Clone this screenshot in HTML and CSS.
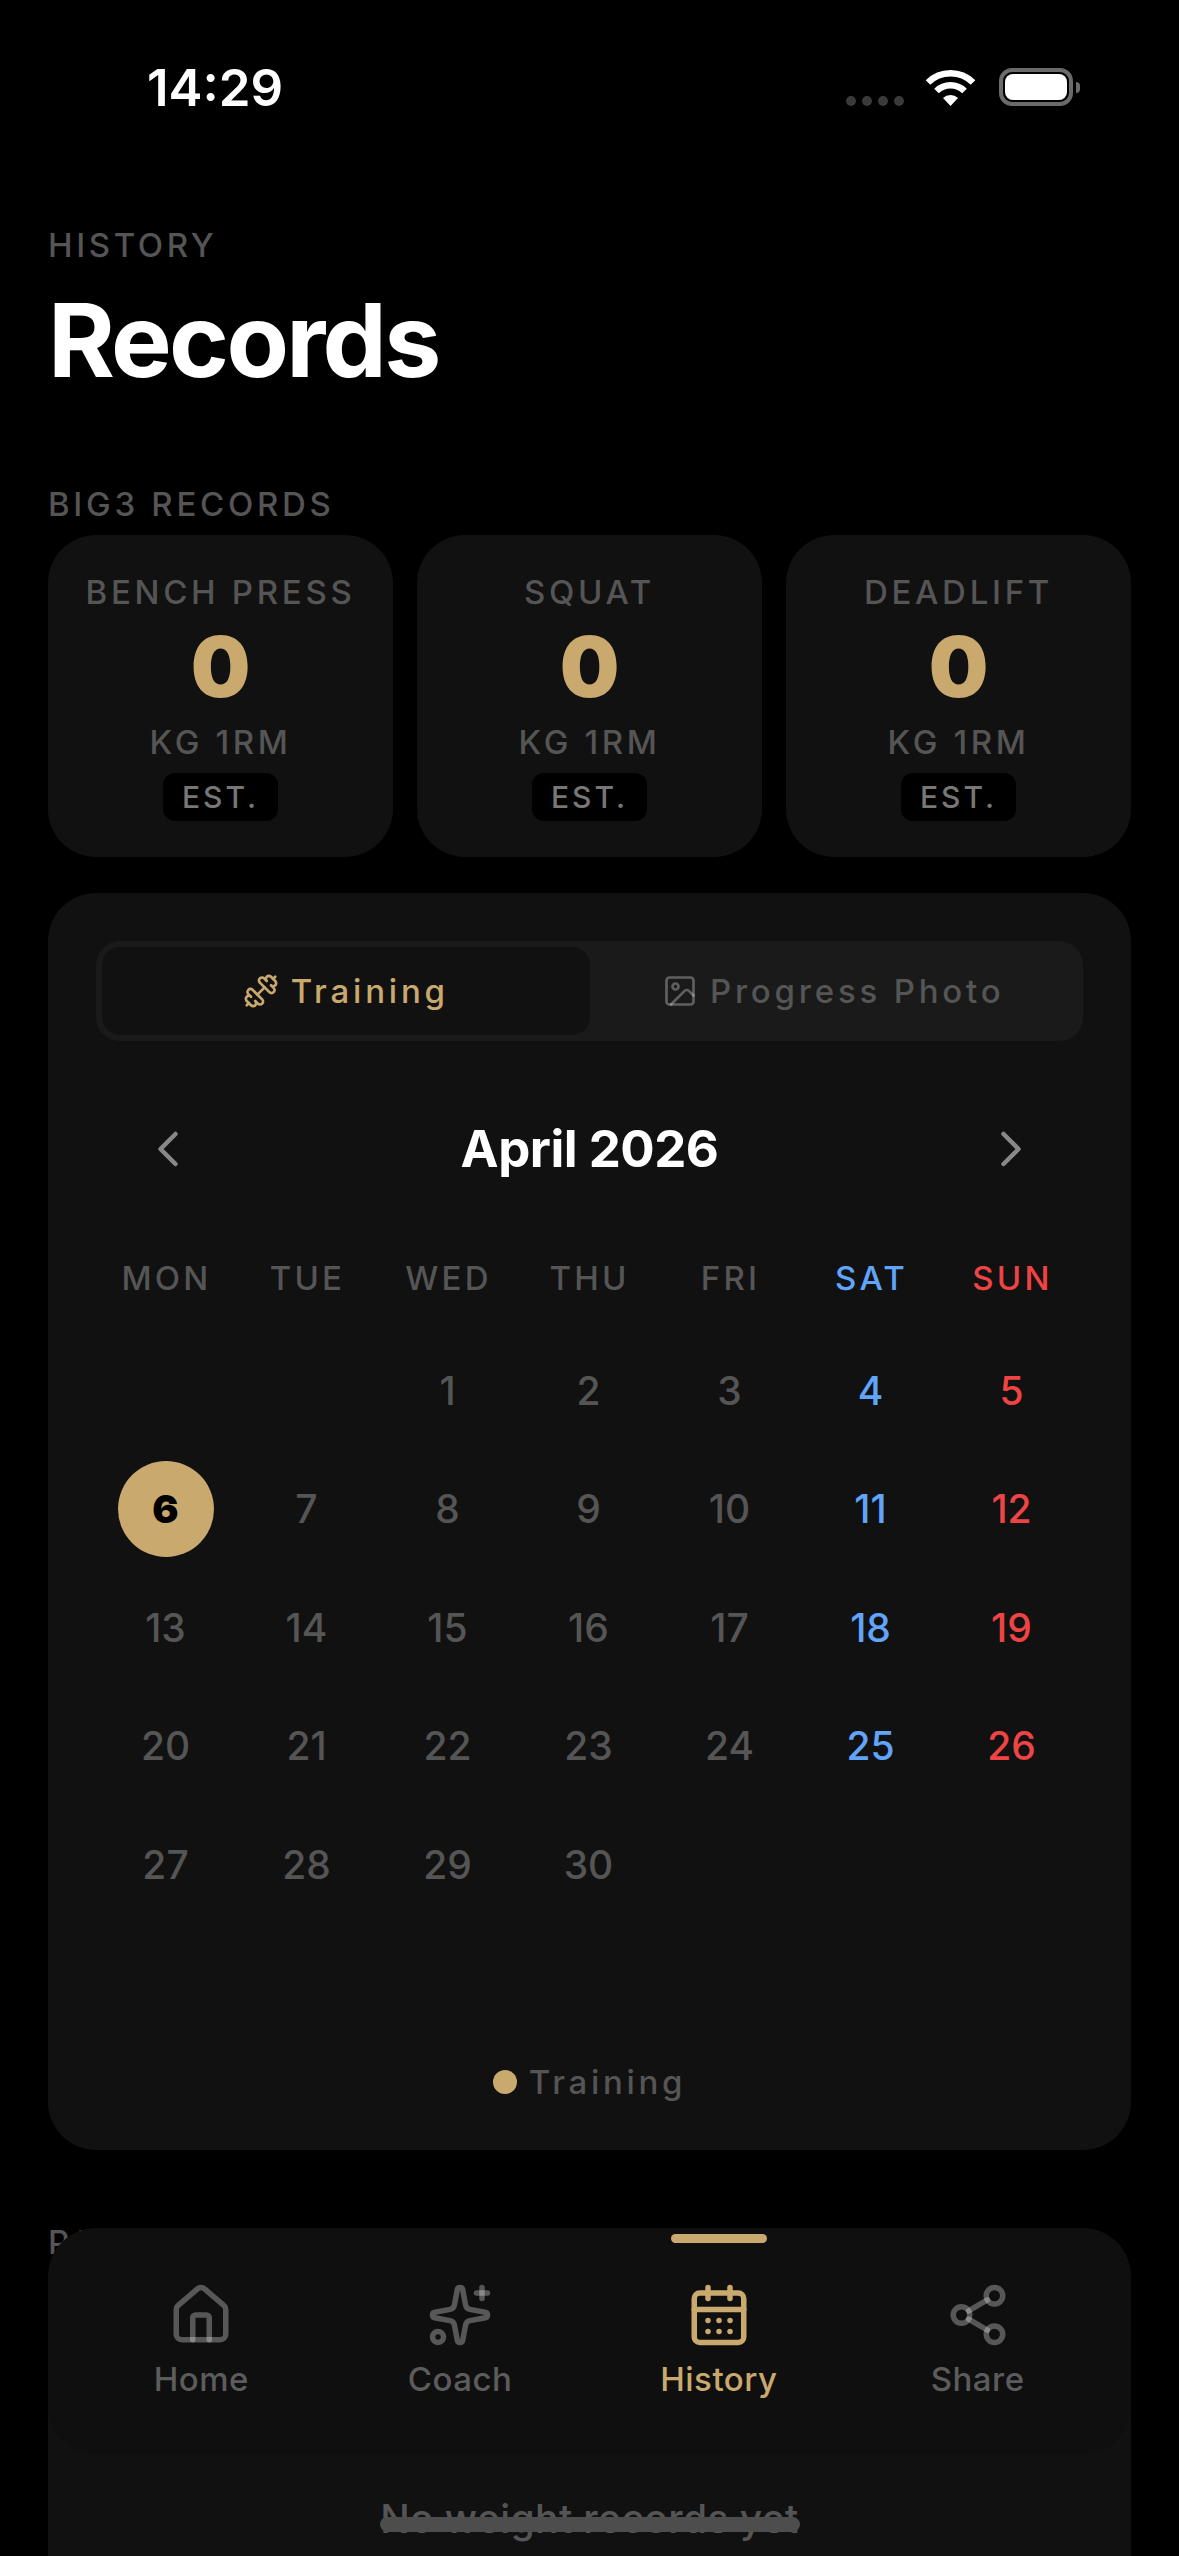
FILE: index.html
```html
<!DOCTYPE html>
<html lang="en">
<head>
<meta charset="utf-8">
<title>Records</title>
<link rel="stylesheet" href="styles.css">
</head>
<body>
<div class="screen">
  <div class="status">
    <span class="time">14:29</span>
    <div class="status-right">
      <div class="signal"><i></i><i></i><i></i><i></i></div>
      <svg class="wifi" viewBox="0 0 51 38"><path d="M3 14.5a32 32 0 0 1 45 0" fill="none" stroke="#fff" stroke-width="6.5"/><path d="M11.5 23a20 20 0 0 1 28 0" fill="none" stroke="#fff" stroke-width="6.5"/><path d="M18 30a11 11 0 0 1 15 0l-7.500 8z" fill="#fff"/></svg>
      <div class="battery"><div class="battery-fill"></div></div>
      <div class="battery-nub"></div>
    </div>
  </div>

  <main class="content">
    <div class="eyebrow">HISTORY</div>
    <h1 class="title">Records</h1>

    <div class="section-label big3-label">BIG3 RECORDS</div>
    <div class="records">
      <div class="record"><div class="record-name">BENCH PRESS</div><div class="record-value">0</div><div class="record-unit">KG 1RM</div><div class="badge">EST.</div></div>
      <div class="record"><div class="record-name">SQUAT</div><div class="record-value">0</div><div class="record-unit">KG 1RM</div><div class="badge">EST.</div></div>
      <div class="record"><div class="record-name">DEADLIFT</div><div class="record-value">0</div><div class="record-unit">KG 1RM</div><div class="badge">EST.</div></div>
    </div>

    <section class="calendar-card">
      <div class="tabs">
        <div class="tab tab-active">
          <svg class="tab-icon" viewBox="0 0 24 24"><path d="M17.596 12.768a2 2 0 1 0 2.829-2.829l-1.768-1.767a2 2 0 0 0 2.828-2.829l-2.828-2.828a2 2 0 0 0-2.829 2.828l-1.767-1.768a2 2 0 1 0-2.829 2.829z"/><path d="m2.500 21.500 1.400-1.400"/><path d="m20.100 3.900 1.400-1.400"/><path d="M5.343 21.485a2 2 0 1 0 2.829-2.828l1.767 1.768a2 2 0 1 0 2.829-2.829l-6.364-6.364a2 2 0 1 0-2.829 2.829l1.768 1.767a2 2 0 0 0-2.828 2.829z"/><path d="m9.600 14.400 4.800-4.800"/></svg>
          <span>Training</span>
        </div>
        <div class="tab">
          <svg class="tab-icon icon-muted" viewBox="0 0 24 24"><rect x="3" y="3" width="18" height="18" rx="2"/><circle cx="9" cy="9" r="2"/><path d="m21 15-3.086-3.086a2 2 0 0 0-2.828 0L6 21"/></svg>
          <span>Progress Photo</span>
        </div>
      </div>

      <div class="month-row">
        <svg class="chev" viewBox="0 0 24 24"><path d="m15 18-6-6 6-6"/></svg>
        <span class="month">April 2026</span>
        <svg class="chev" viewBox="0 0 24 24"><path d="m9 18 6-6-6-6"/></svg>
      </div>

      <div class="grid weekdays">
        <span>MON</span><span>TUE</span><span>WED</span><span>THU</span><span>FRI</span><span class="sat">SAT</span><span class="sun">SUN</span>
      </div>

      <div class="grid days">
        <span></span><span></span><span>1</span><span>2</span><span>3</span><span class="sat">4</span><span class="sun">5</span>
        <span><b class="today">6</b></span><span>7</span><span>8</span><span>9</span><span>10</span><span class="sat">11</span><span class="sun">12</span>
        <span>13</span><span>14</span><span>15</span><span>16</span><span>17</span><span class="sat">18</span><span class="sun">19</span>
        <span>20</span><span>21</span><span>22</span><span>23</span><span>24</span><span class="sat">25</span><span class="sun">26</span>
        <span>27</span><span>28</span><span>29</span><span>30</span><span></span><span></span><span></span>
      </div>

      <div class="legend"><i class="legend-dot"></i><span>Training</span></div>
    </section>

    <div class="section-label progress-label">PAST WEIGHT</div>
    <section class="empty-card">No weight records yet</section>
  </main>

  <nav class="nav">
    <div class="nav-marker"></div>
    <div class="nav-item">
      <svg class="nav-icon icon-muted" viewBox="0 0 24 24"><path d="M15 21v-8a1 1 0 0 0-1-1h-4a1 1 0 0 0-1 1v8"/><path d="M3 10a2 2 0 0 1 .709-1.528l7-5.999a2 2 0 0 1 2.582 0l7 5.999A2 2 0 0 1 21 10v9a2 2 0 0 1-2 2H5a2 2 0 0 1-2-2z"/></svg>
      <span>Home</span>
    </div>
    <div class="nav-item">
      <svg class="nav-icon icon-muted" viewBox="0 0 24 24"><path d="M11.017 2.814a1 1 0 0 1 1.966 0l1.051 5.558a2 2 0 0 0 1.594 1.594l5.558 1.051a1 1 0 0 1 0 1.966l-5.558 1.051a2 2 0 0 0-1.594 1.594l-1.051 5.558a1 1 0 0 1-1.966 0l-1.051-5.558a2 2 0 0 0-1.594-1.594l-5.558-1.051a1 1 0 0 1 0-1.966l5.558-1.051a2 2 0 0 0 1.594-1.594z"/><path d="M20 2v4"/><path d="M22 4h-4"/><circle cx="4" cy="20" r="2"/></svg>
      <span>Coach</span>
    </div>
    <div class="nav-item nav-active">
      <svg class="nav-icon" viewBox="0 0 24 24"><path d="M8 2v4"/><path d="M16 2v4"/><rect x="3" y="4" width="18" height="18" rx="2"/><path d="M3 10h18"/><path d="M8 14h.01"/><path d="M12 14h.01"/><path d="M16 14h.01"/><path d="M8 18h.01"/><path d="M12 18h.01"/><path d="M16 18h.01"/></svg>
      <span>History</span>
    </div>
    <div class="nav-item">
      <svg class="nav-icon icon-muted" viewBox="0 0 24 24"><circle cx="18" cy="5" r="3"/><circle cx="6" cy="12" r="3"/><circle cx="18" cy="19" r="3"/><path d="m8.590 13.510 6.830 3.980"/><path d="m15.410 6.510-6.820 3.980"/></svg>
      <span>Share</span>
    </div>
  </nav>
  <div class="home-bar"></div>
</div>
</body>
</html>
```
FILE: styles.css
```css
* { box-sizing: border-box; }
html, body { margin: 0; padding: 0; background: #000; }
body { font-family: Inter, "Noto Sans", sans-serif; color: #555; }
.screen { position: relative; width: 1179px; height: 2556px; overflow: hidden; background: #000; }

.status { height: 190px; position: relative; }
.time { position: absolute; left: 147px; top: 58px; font-size: 51px; line-height: 60px; font-weight: 600; color: #fff; }
.status-right { position: absolute; left: 846px; top: 68px; display: flex; align-items: flex-start; height: 38px; }
.signal { display: flex; gap: 6px; margin-top: 28px; }
.signal i { width: 10px; height: 10px; border-radius: 50%; background: #3a3a3a; }
.wifi { width: 51px; height: 38px; margin-left: 21px; }
.battery { width: 74px; height: 38px; margin-left: 23px; border: 4px solid #6b6b6b; border-radius: 13px; padding: 2px; }
.battery-fill { width: 100%; height: 100%; background: #fff; border-radius: 8px; }
.battery-nub { width: 4px; height: 11px; margin: 14px 0 0 3px; background: #6b6b6b; border-radius: 0 6px 6px 0; }

.content { padding: 0 48px; }
.eyebrow { font-size: 33px; line-height: 40px; letter-spacing: 3.600px; color: #555; font-weight: 500; margin-top: 35px; }
.title { margin: 20px 0 0; font-size: 102px; line-height: 110px; font-weight: 700; color: #fff; letter-spacing: -2.700px; }
.section-label { font-size: 33px; line-height: 40px; letter-spacing: 3.700px; font-weight: 500; color: #555; }
.big3-label { margin-top: 89px; }

.records { display: grid; grid-template-columns: repeat(3, 1fr); gap: 24px; margin-top: 11px; }
.record { background: #111; border-radius: 48px; padding: 36px 12px; display: flex; flex-direction: column; align-items: center; }
.record-name { font-size: 33px; line-height: 42px; letter-spacing: 3.700px; font-weight: 500; color: #555; white-space: nowrap; }
.record-value { margin-top: 15px; font-size: 84px; line-height: 78px; font-weight: 900; color: #c9a96e; }
.record-unit { margin-top: 15px; font-size: 33px; line-height: 42px; letter-spacing: 3.600px; font-weight: 500; color: #555; }
.badge { margin-top: 10px; width: 115px; height: 48px; line-height: 48px; text-align: center; background: #000; border-radius: 12px; font-size: 30px; letter-spacing: 3px; font-weight: 500; color: #777; }

.calendar-card { margin-top: 36px; height: 1257px; background: #111; border-radius: 48px; padding: 48px; }
.tabs { display: flex; height: 100px; padding: 6px; background: #1a1a1a; border-radius: 24px; }
.tab { flex: 1; display: flex; align-items: center; justify-content: center; gap: 12px; border-radius: 18px; font-size: 33px; letter-spacing: 3.800px; font-weight: 500; color: #555; }
.tab-active { background: #111; color: #c9a96e; }
.tab-icon { width: 36px; height: 36px; fill: none; stroke: currentColor; stroke-width: 1.800; stroke-linecap: round; stroke-linejoin: round; }

.month-row { display: flex; align-items: center; justify-content: space-between; height: 66px; margin-top: 75px; padding: 0 42px; }
.month { font-size: 51px; line-height: 66px; font-weight: 700; letter-spacing: -0.500px; color: #fff; }
.chev { width: 60px; height: 60px; fill: none; stroke: #888; stroke-width: 1.800; stroke-linecap: round; stroke-linejoin: round; }

.grid { display: grid; grid-template-columns: repeat(7, 141px); text-align: center; }
.weekdays { margin-top: 76px; font-size: 33px; line-height: 40px; letter-spacing: 3.200px; font-weight: 550; color: #555; }
.days { margin: 33px 0 0 -1px; grid-auto-rows: 118.500px; font-size: 39px; font-weight: 550; color: #555; }
.days span { display: flex; align-items: center; justify-content: center; }
.weekdays .sat, .days .sat { color: #60a5fa; }
.weekdays .sun, .days .sun { color: #ef4444; }
.today { width: 96px; height: 96px; border-radius: 50%; background: #c9a96e; color: #000; font-weight: 900; display: flex; align-items: center; justify-content: center; }

.legend { display: flex; align-items: center; justify-content: center; gap: 12px; margin-top: 138px; font-size: 33px; line-height: 40px; letter-spacing: 3.700px; font-weight: 500; color: #555; }
.legend-dot { width: 24px; height: 24px; border-radius: 50%; background: #c9a96e; }

.progress-label { margin-top: 72px; white-space: nowrap; }
.empty-card { margin-top: 12px; height: 400px; background: #111; border-radius: 48px; padding-top: 221px; text-align: center; font-size: 39px; line-height: 48px; font-weight: 500; letter-spacing: 0.400px; color: #555; }

.nav { position: absolute; left: 48px; top: 2228px; width: 1083px; height: 226px; background: #0f0f0f; border-radius: 48px; display: grid; grid-template-columns: repeat(4, 1fr); padding: 54px 24px 0; align-items: start; z-index: 2; }
.nav-marker { position: absolute; left: 623px; top: 6px; width: 96px; height: 9px; border-radius: 5px; background: #c9a96e; }
.nav-item { display: flex; flex-direction: column; align-items: center; gap: 10px; font-size: 33px; line-height: 42px; font-weight: 500; letter-spacing: 0.500px; color: #5c5c5c; }
.nav-active { color: #c9a96e; }
.nav-icon { width: 66px; height: 66px; fill: none; stroke: currentColor; stroke-width: 2; stroke-linecap: round; stroke-linejoin: round; }
.icon-muted { stroke: rgba(255, 255, 255, 0.3); }
.home-bar { position: absolute; left: 380px; top: 2517px; width: 420px; height: 15px; border-radius: 8px; background: #4d4d4d; z-index: 3; }
```
